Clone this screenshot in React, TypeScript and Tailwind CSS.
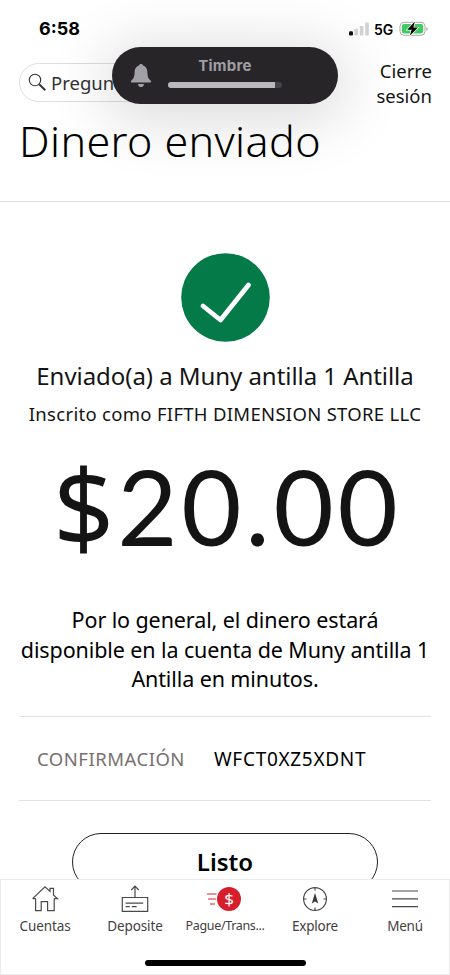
import type { ReactNode } from 'react'

const icon = {
  fill: 'none',
  stroke: '#4a4848',
  strokeWidth: 1.2,
  viewBox: '0 0 30 30',
  className: 'w-[30px] h-[30px]',
} as const

function HomeIcon() {
  return (
    <svg {...icon}>
      <path d="M5.6 14.6V26.6H11.2V17.6H17.6V26.6H24.2V14.6M2.6 14.6L15 2.9L20 7.4V4.4H23.5V10.9L27.4 14.6H24.2M2.6 14.6H5.6" />
    </svg>
  )
}

function DepositIcon() {
  return (
    <svg {...icon}>
      <path d="M2.3 13.5H27.7V27.4H2.3ZM15 13.5V2.4M11.3 6L15 2.1L18.7 6" />
      <path d="M5.6 19.2H23.2M5.6 22.6H9.7M11.8 22.6H16.6" />
    </svg>
  )
}

function PayIcon() {
  return (
    <div className="flex items-center h-[30px] pr-[2px]">
      <svg width="10" height="14" viewBox="0 0 10 14" stroke="#d5202c" strokeWidth="1.2">
        <path d="M0 2H9.5M1 7H9M3 12H8" />
      </svg>
      <span className="w-[24px] h-[24px] rounded-full bg-[#d71e2b] text-white text-[17px] leading-[24px] text-center">$</span>
    </div>
  )
}

function CompassIcon() {
  return (
    <svg {...icon}>
      <circle cx="15" cy="15" r="11.4" />
      <path d="M15 3.5V6.5M15 23.5V26.5M3.5 15H6.5M23.5 15H26.5" />
      <path d="M15 8.7L18.2 19.6L15 17.4L11.8 19.6Z" fill="#3b3939" stroke="none" />
    </svg>
  )
}

function MenuIcon() {
  return (
    <svg {...icon}>
      <path d="M2 7H28M2 14.8H28M2 22.6H28" />
    </svg>
  )
}

const TABS: { label: string; icon: ReactNode; text: string }[] = [
  { label: 'Cuentas', icon: <HomeIcon />, text: 'text-[13.5px] tracking-[-0.1px]' },
  { label: 'Deposite', icon: <DepositIcon />, text: 'text-[13.5px] tracking-[-0.1px]' },
  { label: 'Pague/Trans...', icon: <PayIcon />, text: 'text-[12.5px] tracking-[-0.35px]' },
  { label: 'Explore', icon: <CompassIcon />, text: 'text-[13.5px] tracking-[-0.25px]' },
  { label: 'Menú', icon: <MenuIcon />, text: 'text-[13.5px] tracking-[-0.2px]' },
]

function StatusBar() {
  return (
    <div className="flex h-[58px] justify-between pl-[39px] pr-[21px] font-['Inter'] text-black">
      <span className="pt-[18px] text-[18px] leading-[22px] font-bold">6:58</span>
      <div className="flex items-start pt-[20px]">
        <svg width="22" height="17" viewBox="0 0 22 17" className="mt-[1px]">
          <rect x="0" y="10.2" width="4" height="4.3" rx="1.2" fill="#111" />
          <rect x="5.4" y="7.7" width="3.6" height="6.8" rx="1" fill="#d2d2d2" />
          <rect x="10.8" y="5" width="3.6" height="9.5" rx="1" fill="#d2d2d2" />
          <rect x="16.2" y="1.4" width="3.6" height="13.1" rx="1" fill="#d2d2d2" />
        </svg>
        <span className="ml-[3px] w-[22px] text-[14px] leading-[19px] font-semibold">5G</span>
        <svg width="30" height="17" viewBox="0 0 30 17" className="ml-[3px]">
          <rect x="1" y="2.3" width="25" height="13" rx="4" fill="#fff" stroke="#a9a9a9" />
          <rect x="2.8" y="4.1" width="21.4" height="9.4" rx="2.4" fill="#3fcb62" />
          <path d="M27.3 7V11Q28.8 10.2 28.8 9T27.3 7Z" fill="#a9a9a9" />
          <path d="M15.8 1.6L8.2 9.8H12.6L10.8 15.8L19 7.6H14.4Z" fill="#000" stroke="#fff" strokeWidth="1.4" paintOrder="stroke" />
        </svg>
      </div>
    </div>
  )
}

function RingerOverlay() {
  return (
    <div className="absolute left-[112px] top-[47px] flex h-[57px] w-[226px] rounded-full bg-[#272527] shadow-[0_8px_60px_10px_rgba(0,0,0,0.14)]">
      <svg width="22" height="26" viewBox="0 0 22 26" fill="#a3a1a8" className="ml-[18px] mt-[16px]">
        <path d="M11 1C12.1 1 12.9 1.6 13.1 2.6C16 3.5 17.3 5.9 17.4 9.2C17.6 14.2 18.4 15.6 20.6 17.4C21.6 18.3 21.2 19.6 20 19.6H2C.8 19.6.4 18.3 1.4 17.4C3.6 15.6 4.4 14.2 4.6 9.2C4.7 5.9 6 3.5 8.9 2.6C9.1 1.6 9.9 1 11 1Z" />
        <path d="M8 21H14C13.8 22.9 12.6 24.1 11 24.1S8.2 22.9 8 21Z" />
      </svg>
      <div className="ml-[16px] w-[114px]">
        <div className="mt-[9px] text-center font-['Inter'] text-[15px] leading-[20px] font-bold tracking-[0.3px] text-[#a09ea5]">Timbre</div>
        <div className="mt-[6px] h-[6px] overflow-hidden rounded-full bg-[#464449]">
          <div className="h-full w-[107px] bg-[#bab8be]" />
        </div>
      </div>
    </div>
  )
}

export default function App() {
  return (
    <div className="relative flex h-[975px] w-[450px] flex-col overflow-hidden bg-white font-['Noto_Sans',sans-serif] text-[#141414]">
      <header className="h-[202px] shrink-0 border-b border-[#dfdfdf]">
        <StatusBar />
        <div className="flex h-[54px] justify-between pl-[19px] pr-[18px]">
          <div className="mt-[5px] flex h-[39px] w-[200px] items-center rounded-full border border-[#dedede] bg-white pl-[8px]">
            <svg width="20" height="20" viewBox="0 0 20 20" fill="none" stroke="#333">
              <circle cx="7" cy="7" r="5.7" strokeWidth="1.1" />
              <path d="M11.2 11.2L17.3 17.2" strokeWidth="1.9" />
            </svg>
            <span className="ml-[3px] text-[18.5px] leading-[26px] text-[#333]">Pregunte</span>
          </div>
          <div className="text-right text-[18.5px] leading-[25px]">
            Cierre
            <br />
            sesión
          </div>
        </div>
        <h1 className="mt-[3px] pl-[19px] text-[43px] leading-[52px] font-light tracking-[0.4px] text-black">Dinero enviado</h1>
      </header>

      <main className="flex min-h-0 grow flex-col items-center">
        <svg width="89" height="89" viewBox="0 0 89 89" className="mt-[51px] shrink-0">
          <circle cx="44.5" cy="44.5" r="44.3" fill="#047a49" />
          <path d="M22 53L39.5 67L67.5 32" fill="none" stroke="#fff" strokeWidth="4.8" strokeLinecap="round" strokeLinejoin="round" />
        </svg>
        <p className="mt-[18px] whitespace-nowrap text-[24px] leading-[32px] tracking-[-0.05px]">Enviado(a) a Muny antilla 1 Antilla</p>
        <p className="mt-[9px] whitespace-nowrap text-[18.5px] leading-[26px] tracking-[0.3px]">Inscrito como FIFTH DIMENSION STORE LLC</p>
        <p className="mt-[19px] flex self-start whitespace-nowrap pl-[53px] leading-[120px]">
          <span className="text-[107px]">$</span>
          <span className="ml-[3px] font-['Lato'] text-[104px] tracking-[3.7px]">20.00</span>
        </p>
        <p className="mt-[39px] whitespace-nowrap text-center text-[21.5px] leading-[29.5px] tracking-[-0.1px] text-black">
          Por lo general, el dinero estará
          <br />
          disponible en la cuenta de Muny antilla 1
          <br />
          Antilla en minutos.
        </p>
        <div className="mt-[22px] flex h-[85px] w-[412px] shrink-0 items-center border-y border-[#e2e2e2] pl-[18px] pt-[2px] text-[18.5px]">
          <span className="w-[177px] tracking-[0.5px] text-[#787070]">CONFIRMACIÓN</span>
          <span className="text-[19px] tracking-[0.7px] text-black">WFCT0XZ5XDNT</span>
        </div>
        <button className="mt-[32px] h-[58px] w-[306px] shrink-0 rounded-full border border-[#222] text-[24px] font-semibold text-black">
          Listo
        </button>
      </main>

      <nav className="relative h-[96px] shrink-0 border border-[#ececec] bg-white">
        <div className="-mx-px grid grid-cols-5">
          {TABS.map(t => (
            <div key={t.label} className="flex flex-col items-center pt-[4px] text-[#444040]">
              {t.icon}
              <span className={`mt-[2px] whitespace-nowrap leading-[20px] ${t.text}`}>{t.label}</span>
            </div>
          ))}
        </div>
        <div className="mx-auto mt-[24px] h-[6px] w-[161px] rounded-full bg-black" />
      </nav>

      <RingerOverlay />
    </div>
  )
}
